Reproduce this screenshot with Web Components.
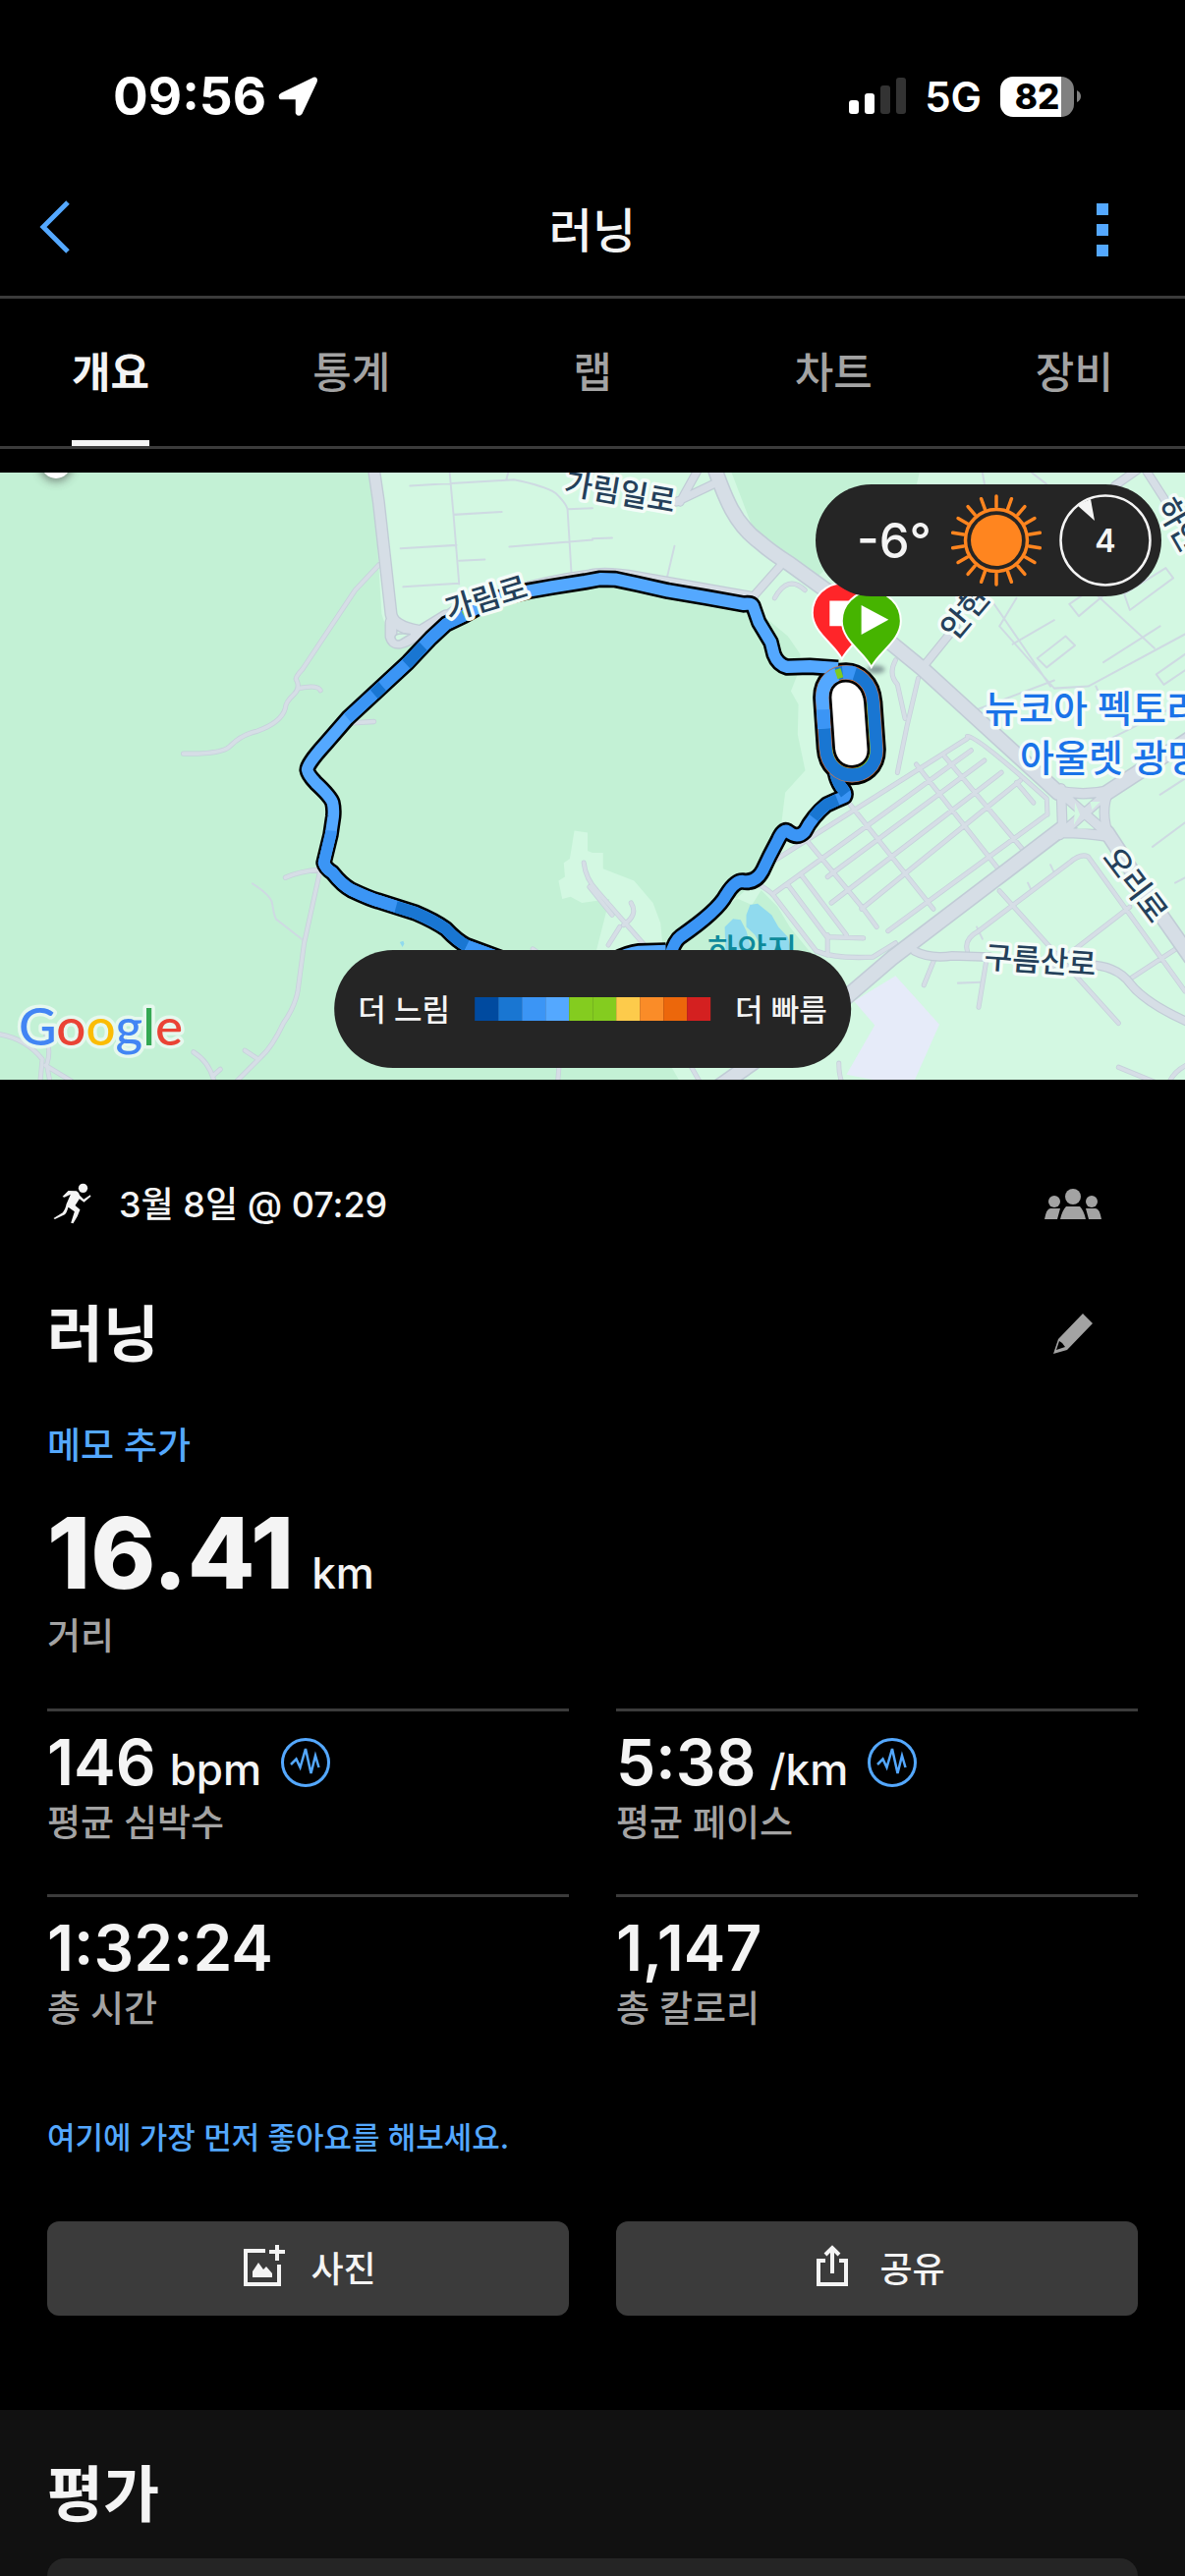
<!DOCTYPE html>
<html lang="ko">
<head>
<meta charset="utf-8">
<meta name="viewport" content="width=device-width, initial-scale=1">
<title>러닝</title>
<style>
  :root {
    --bg: #000;
    --surface: #111;
    --card: #252525;
    --line: #3b3b3b;
    --text: #f4f4f4;
    --muted: #a3a3a3;
    --accent: #54a8ff;
    --gutter: 48px;
  }
  body {
    margin: 0;
    background: var(--bg);
    color: var(--text);
    font-family: Inter, "Noto Sans CJK KR", sans-serif;
    font-weight: 500;
  }
</style>
</head>
<body>
<activity-page>
  <status-bar slot="top" time="09:56" network="5G" battery="82"></status-bar>
  <nav-header slot="top">러닝</nav-header>
  <tab-bar slot="top">
    <tab-item selected>개요</tab-item>
    <tab-item>통계</tab-item>
    <tab-item>랩</tab-item>
    <tab-item>차트</tab-item>
    <tab-item>장비</tab-item>
  </tab-bar>

  <route-map>
    <weather-chip slot="weather" temp="-6°" wind="4"></weather-chip>
    <pace-legend slot="legend">
      <span slot="slow">더 느림</span>
      <span slot="fast">더 빠름</span>
    </pace-legend>
  </route-map>

  <activity-summary>
    <span slot="date">3월 8일 @ 07:29</span>
    <span slot="name">러닝</span>
    <span slot="memo">메모 추가</span>
    <stat-tile slot="hero" size="large" value="16.41" unit="km">거리</stat-tile>
    <stat-tile value="146" unit="bpm" chart>평균 심박수</stat-tile>
    <stat-tile value="5:38" unit="/km" chart>평균 페이스</stat-tile>
    <stat-tile value="1:32:24">총 시간</stat-tile>
    <stat-tile value="1,147">총 칼로리</stat-tile>
    <span slot="like">여기에 가장 먼저 좋아요를 해보세요.</span>
    <action-button slot="actions" icon="photo">사진</action-button>
    <action-button slot="actions" icon="share">공유</action-button>
  </activity-summary>

  <rating-section>평가</rating-section>
</activity-page>

<script>
class BaseElement extends HTMLElement {
    constructor () {
        super();
        this.attachShadow({mode: 'open'});
    }

    connectedCallback () {
        this.shadowRoot.innerHTML = this.render();
    }

    attr (name) {
        return this.getAttribute(name) || '';
    }
}

class ActivityPage extends BaseElement {
    render () {
        return `
    <style>
      :host {
        display: flex;
        flex-direction: column;
        height: 100vh;
        overflow: hidden;
      }
      header {
        margin-bottom: 24px;
      }
      main {
        display: flex;
        flex-direction: column;
        flex: 1;
      }
    </style>
    <header><slot name="top"></slot></header>
    <main><slot></slot></main>`;
    }
}

class StatusBar extends BaseElement {
    render () {
        return `
    <style>
      :host {
        display: flex;
        align-items: center;
        justify-content: space-between;
        box-sizing: border-box;
        height: 167px;
        padding: 29px 106px 0 115px;
        color: #fff;
      }
      div {
        display: flex;
        align-items: center;
      }
      .left { gap: 12px; }
      .right { gap: 19px; }
      .time { font-size: 53px; font-weight: 700; }
      .network { font-size: 42px; font-weight: 600; }
      .battery {
        width: 75px;
        height: 41px;
        border-radius: 13px;
        justify-content: center;
        background: linear-gradient(to right, #fff 62px, #808080 62px);
        color: #000;
        font-size: 35px;
        font-weight: 800;
      }
      .cell { gap: 3px; }
      svg { display: block; }
    </style>
    <div class="left">
      <span class="time">${this.attr('time')}</span>
      <svg width="42" height="42" viewBox="0 0 42 42"><path d="M36 3 4 18.500q-3 1.500-1.500 4.500h15.500q1 0 1 1v14q1.500 3 4.500 0L38.500 6q1-4-2.500-3Z" fill="#fff" stroke="#fff" stroke-width="2.500" stroke-linejoin="round"/></svg>
    </div>
    <div class="right">
      <svg width="58" height="38" viewBox="0 0 58 38">
        <rect y="23" width="10" height="14" rx="3" fill="#fff"/>
        <rect x="16" y="16" width="10" height="21" rx="3" fill="#fff"/>
        <rect x="32" y="8" width="10" height="29" rx="3" fill="#333"/>
        <rect x="48" width="10" height="37" rx="3" fill="#333"/>
      </svg>
      <span class="network">${this.attr('network')}</span>
      <div class="cell">
        <div class="battery">${this.attr('battery')}</div>
        <svg width="4" height="12" viewBox="0 0 4 12"><path d="M0 0q4 2 4 6t-4 6Z" fill="#808080"/></svg>
      </div>
    </div>`;
    }
}

class NavHeader extends BaseElement {
    render () {
        return `
    <style>
      :host {
        display: grid;
        grid-template-columns: 1fr auto 1fr;
        align-items: center;
        height: 134px;
        padding: 0 40px;
        border-bottom: 3px solid var(--line);
      }
      h1 {
        margin: 0;
        padding-bottom: 6px;
        font-size: 48px;
        font-weight: 500;
      }
      button {
        display: block;
        padding: 0 0 6px;
        border: 0;
        background: none;
        color: var(--accent);
      }
      .menu {
        justify-self: end;
        margin-right: 38px;
        padding: 0;
      }
      svg { display: block; }
    </style>
    <button aria-label="뒤로"><svg width="32" height="54" viewBox="0 0 32 54"><path d="M29 2 4 27l25 25" fill="none" stroke="currentColor" stroke-width="5"/></svg></button>
    <h1><slot></slot></h1>
    <button class="menu" aria-label="메뉴"><svg width="12" height="54" viewBox="0 0 12 54"><path d="M0 0h12v12H0ZM0 21h12v12H0ZM0 42h12v12H0Z" fill="currentColor"/></svg></button>`;
    }
}

class TabBar extends BaseElement {
    render () {
        return `
    <style>
      :host {
        display: block;
        overflow: hidden;
        border-bottom: 3px solid var(--line);
      }
      nav {
        display: grid;
        grid-template-columns: repeat(5, 1fr);
        margin: 0 -10px;
      }
    </style>
    <nav><slot></slot></nav>`;
    }
}

class TabItem extends BaseElement {
    render () {
        return `
    <style>
      :host {
        display: flex;
        justify-content: center;
      }
      button {
        height: 150px;
        padding: 0;
        border: 0;
        border-bottom: 6px solid transparent;
        background: none;
        color: var(--muted);
        font: inherit;
        font-size: 43px;
      }
      :host([selected]) button {
        border-color: var(--text);
        color: var(--text);
        font-weight: 600;
      }
    </style>
    <button><slot></slot></button>`;
    }
}

class RouteMap extends BaseElement {
    render () {
        return `
    <style>
      :host {
        display: block;
        position: relative;
      }
      .map {
        display: block;
        width: 100%;
        background: #d3f8e2;
      }
      text {
        font-size: 31px;
        fill: #24405a;
        stroke: #f4fcf8;
        stroke-width: 7px;
        stroke-linejoin: round;
        paint-order: stroke;
      }
      .place { font-size: 38px; fill: #1a73e8; }
      .water { fill: #0e8a9b; stroke: none; font-size: 33px; }
      .brand { font-family: Lato, sans-serif; font-size: 53px; stroke: #e6f8ee; }
      .line { fill: none; stroke-linecap: round; stroke-linejoin: round; }
      ::slotted([slot=weather]) {
        position: absolute;
        top: 12px;
        right: 24px;
      }
      ::slotted([slot=legend]) {
        position: absolute;
        bottom: 12px;
        left: 50%;
        transform: translateX(-50%);
      }
    </style>
    <svg class="map" viewBox="0 0 1206 618">
      <defs>
        <path id="main" d="M1885 0C1920 95 1945 155 2010 200 2040 225 2065 240 2090 255L2200 330 2440 515 2800 825M2930 925Q2990 1010 3020 1060L3150 1235M2930 825 3150 690M2810 915 2650 1030 2360 1238 2240 1335 1900 1560"/>
        <path id="cross" d="M2795 815 2940 935M2805 930 2945 815M2808 815 2812 925M2800 820Q2865 835 2935 820 2910 870 2935 935M2810 925Q2870 925 2935 935"/>
        <path id="west" d="M988 10 1002 100 1035 380Q1040 410 1105 422M1035 400V435Q1045 470 1110 425L1180 385"/>
        <path id="feeders" d="M2065 260 1990 340M2440 515 2530 410M1800 100 1850 15M1790 100 1890 55M2420 1220Q2460 1240 2520 1232L2620 1235M2860 1255Q2950 1250 2990 1300T3150 1400M3025 10 3100 120M3010 20 2950 60M1105 422Q1160 400 1215 360 1400 300 1560 280 1600 270 1690 285L1990 335"/>
        <path id="streets" d="M1003 257 940 320 800 518Q778 540 785 545 795 565 778 580 755 600 755 615 745 650 680 672 640 680 610 708 590 730 485 728M790 565Q840 555 848 570M847 1020 805 1200 788 1320Q780 1360 750 1400 720 1460 690 1485L610 1560M755 1037Q790 1022 845 1017M920 652 990 648M0 1428Q70 1440 112 1490L105 1560M125 1500Q135 1470 122 1430M125 1510 135 1560M120 1505 190 1545M512 1472Q560 1500 570 1560M565 1530 583 1515M648 1468 680 1488M1545 1000Q1550 1040 1580 1070L1710 1210M1640 1160 1610 1205M1670 1100Q1690 1130 1650 1155M1560 1060 1620 1130M2000 1050Q2040 1070 2050 1085L2160 1220Q2210 1240 2310 1235L2370 1200M2085 1055 2188 1185 2285 1188M2120 1030 2240 1180M2140 950 2285 1115 2320 1160M2250 855 2470 1115M2425 755 2650 1025M2500 735 2705 965M2560 685Q2580 680 2770 840L2772 880M2050 1075 2570 720M2040 1000 2560 690M2200 1100 2650 775M2190 1035 2605 745M2280 1115 2700 795M2350 1170 2770 880M2690 800 2735 850M2190 1180V1230M2645 1070 2960 1400M2560 1220Q2550 1190 2590 1170L2830 1000Q2860 975 2880 985L3136 1320M2990 1290 3136 1200M2990 1110 2770 1270M2610 1245 2590 1360M2475 1235 2445 1305M2430 540 2400 660 2375 775M2370 495Q2350 530 2375 555L2395 640M2050 340Q2085 280 2130 320M1480 1500 1475 1560M1410 1215 1440 1235M2220 1500Q2220 1540 2235 1560M1830 1510 1860 1560M2960 1510 3090 1560Q3100 1520 3150 1500"/>
        <path id="lanes" d="M1085 60 1360 45Q1440 60 1470 78 1500 105 1502 120L1512 275M1190 27 1200 130 1215 305M1200 132 1328 125M1060 216 1208 208M1215 247 1283 244M1067 312 1215 303M1348 212 1568 195M1502 118 1568 116M1340 45 1345 27M668 1052Q715 1080 720 1100 725 1130 730 1140L805 1195M1785 210 1765 290M1568 192 1620 190M2645 410 2790 565 2880 560 3136 430M2645 410 2690 340M2680 455 2790 395M2745 490 2820 435 2845 458 2770 513ZM2830 355 2930 290 2950 310 2855 385ZM2975 330 3085 265 3105 290 2990 370ZM3060 530 3136 480M3060 530 3080 556 3136 520M2900 330 3055 465M2920 500 3070 410M2620 340 2780 560M2900 560 2920 600M2930 695 3130 600M2580 620 2790 545M3050 960 3136 900M3110 1050 3150 1030M3070 830 3136 790M2600 27 2610 80M2730 27 2770 56M2535 1300 2595 1298M2585 1160 2600 1190M2780 1005 2790 1025M2720 1050 2730 1070"/>
        <path id="route" d="M2218 515 2143 510 2083 512Q2058 505 2048 480L2040 450 2008 400 1993 360Q1988 352 1968 355L1868 338 1768 322 1688 305 1628 293 1588 292 1548 299 1460 312 1400 322 1300 345 1230 382 1180 405 1140 440 1080 500 1000 570 920 640 860 705Q812 755 813 768 815 780 835 800 875 835 880 850 884 865 882 885L875 930 857 1000Q860 1012 880 1025 905 1055 930 1068 980 1090 1000 1095L1100 1125Q1150 1145 1180 1165 1210 1195 1235 1207L1330 1240M1620 1245Q1660 1225 1690 1222L1762 1220"/>
        <path id="climb" d="M1772 1235Q1785 1195 1800 1185 1900 1120 1922 1080 1945 1045 1965 1046 2000 1052 2018 1020 2035 985 2058 945 2072 915 2085 922 2110 942 2130 922 2150 885 2188 855 2210 845 2236 835 2242 825 2225 810 2214 795 2210 775"/>
        <path id="track" d="M2176 590C2173 504 2303 500 2311 600L2320 718C2320 802 2190 806 2185 712Z"/>
        <path id="pin" d="M0 0C-20-38-78-66-78-115-78-157-41-189 0-189S78-157 78-115C78-66 20-38 0 0Z"/>
        <filter id="soft" x="-50%" y="-50%" width="200%" height="200%"><feGaussianBlur stdDeviation="5"/></filter>
      </defs>
      <svg width="1206" height="618" viewBox="0 27 3136 1514" preserveAspectRatio="none">
        <g fill="#c3f1d5">
          <path d="M0 0H985L1010 380 1035 450 1110 430 1260 370 1588 290 1980 360 2040 400 2085 435 2118 480 2115 520 2093 572 2113 605 2111 680 2131 770 2078 825 2063 940 2000 1055 2058 1110 2090 1160 2150 1230 1900 1400 1778 1511 1808 1560H0Z"/>
          <path d="M1925 0H2440L2425 60 2160 290 2090 240 1990 160Z"/>
        </g>
        <path d="M1520 920 1555 925V970L1568 975H1596V1015L1678 1045 1728 1100 1748 1150 1755 1220H1578L1613 1090 1540 1100 1510 1085 1488 1090 1478 1045 1495 1035 1492 1000 1508 990ZM1940 1085 1990 1105 2020 1060 1995 1050 1900 1130Z" fill="#d3f8e2"/>
        <path d="M2370 1282 2486 1403 2412 1560 2240 1528 2315 1405 2260 1345Z" fill="#e6ebf9"/>
        <path d="M1975 1130 1985 1105 2005 1102 2042 1130 2060 1160 2085 1185 2095 1220H2020L1998 1180 1975 1160ZM1918 1160 1940 1140 1960 1142 1975 1170 1990 1220H1920ZM1058 1198 1067 1195 1070 1202 1065 1210Z" fill="#90daee"/>
        <g class="line">
          <use href="#lanes" stroke="#cedae2" stroke-width="5"/>
          <use href="#streets" stroke="#c6d1db" stroke-width="13"/>
          <use href="#streets" stroke="#d6dee6" stroke-width="9"/>
          <use href="#feeders" stroke="#c1ccd6" stroke-width="24"/>
          <use href="#west" stroke="#c1ccd6" stroke-width="34"/>
          <use href="#main" stroke="#c1ccd6" stroke-width="42"/>
          <use href="#cross" stroke="#c1ccd6" stroke-width="28"/>
          <use href="#feeders" stroke="#d6dee6" stroke-width="18"/>
          <use href="#west" stroke="#d6dee6" stroke-width="27"/>
          <use href="#main" stroke="#d6dee6" stroke-width="34"/>
          <use href="#cross" stroke="#d6dee6" stroke-width="22"/>
          <path d="M2845 850 2858 880 2842 905ZM2885 848 2912 848 2890 868ZM2870 895 2895 915 2850 915Z" fill="#d3f8e2"/>
          <path d="M1045 438Q1045 425 1085 430L1060 444Q1048 450 1045 438Z" fill="#d3f8e2" stroke="#c1ccd6" stroke-width="4"/>
        </g>
        <g class="line" style="stroke-linecap: butt">
          <use href="#route" stroke="#000" stroke-width="43"/>
          <use href="#climb" stroke="#000" stroke-width="43"/>
          <use href="#track" fill="#fff" stroke="#000" stroke-width="50"/>
          <use href="#route" stroke="#54a8ff" stroke-width="30"/>
          <use href="#climb" stroke="#3b95f5" stroke-width="30"/>
          <path d="M1235 380 1180 405 1140 440 1080 500 1000 570 920 640M876 920 875 930 857 1000Q860 1012 880 1025 905 1055 930 1068 980 1090 1000 1095L1050 1110M1235 1207 1330 1240" stroke="#3b95f5" stroke-width="30"/>
          <path d="M1120 460 1075 505M1012 560 990 580M1048 1110 1100 1125Q1150 1145 1180 1165 1210 1195 1235 1207M2153 888Q2170 865 2188 855L2216 843M2238 828Q2214 795 2210 775" stroke="#1976d2" stroke-width="30"/>
          <path d="M1238 378 1228 384" stroke="#7fcb1d" stroke-width="24"/>
          <use href="#track" stroke="#df7740" stroke-width="36"/>
          <path d="M2303 600 2312 718C2310 792 2196 796 2193 712" stroke="#7fcb1d" stroke-width="19"/>
          <use href="#track" stroke="#1976d2" stroke-width="33"/>
          <path d="M2181 665 2176 590C2176 560 2190 540 2215 530" stroke="#54a8ff" stroke-width="34"/>
          <path d="M2179 618 2181 665M2230 526Q2250 524 2262 528" stroke="#3b95f5" stroke-width="34"/>
          <path d="M2213 531 2228 526" stroke="#7fcb1d" stroke-width="24"/>
        </g>
        <ellipse cx="2318" cy="518" rx="24" ry="10" fill="#53606a" opacity=".6" filter="url(#soft)"/>
        <g stroke="#fff" stroke-width="5">
          <use href="#pin" x="2228" y="492" fill="#ff2529"/>
          <path d="M2198 349h60v58h-60Z" fill="#fff"/>
          <use href="#pin" x="2306" y="512" fill="#46b400"/>
          <path d="M2282 362 2346 394 2282 427Z" fill="#fff"/>
        </g>
      </svg>
      <circle cx="57" cy="-8" r="17" fill="#444" opacity=".6" filter="url(#soft)"/>
      <circle cx="57" cy="-9" r="15" fill="#fff"/>
      <text transform="translate(573 21) rotate(10)">가림일로</text>
      <text transform="translate(457 151) rotate(-17)">가림로</text>
      <text transform="translate(972 172) rotate(-50)">안현</text>
      <text transform="translate(1176 34) rotate(60)">하안</text>
      <text transform="translate(1121 392) rotate(53)">오리로</text>
      <text transform="translate(1001 504) rotate(4)">구름산로</text>
      <text class="place" x="1002" y="254">뉴코아 펙토리</text>
      <text class="place" x="1038" y="304">아울렛 광명점</text>
      <text class="water" x="720" y="498">하안지</text>
      <text class="brand" x="19" y="583"><tspan fill="#4285f4">G</tspan><tspan fill="#ea4335">o</tspan><tspan fill="#fbbc05">o</tspan><tspan fill="#4285f4">g</tspan><tspan fill="#34a853">l</tspan><tspan fill="#ea4335">e</tspan></text>
    </svg>
    <slot name="weather"></slot>
    <slot name="legend"></slot>`;
    }
}

class WeatherChip extends BaseElement {
    render () {
        let rays = '';
        for (let a = 0; a < 360; a += 20) {
            rays += `<path d="M0-34V-45" transform="rotate(${a})"/>`;
        }
        return `
    <style>
      :host {
        display: flex;
        align-items: center;
        box-sizing: border-box;
        height: 114px;
        padding: 0 10px 0 42px;
        border-radius: 57px;
        background: var(--card);
      }
      .temp {
        margin-right: 20px;
        font-size: 49px;
      }
      .sun {
        width: 92px;
        height: 94px;
        margin-right: 18px;
      }
      .wind {
        display: grid;
        place-items: center;
        font-size: 32px;
        font-weight: 600;
      }
      .wind > * { grid-area: 1 / 1; }
    </style>
    <span class="temp">${this.attr('temp')}</span>
    <svg class="sun" viewBox="-46 -47 92 94">
      <g fill="none" stroke="#ff851f" stroke-width="3.500" stroke-linecap="round">${rays}<circle r="31.500"/></g>
      <circle r="26" fill="#ff851f"/>
    </svg>
    <div class="wind">
      <svg width="94" height="94" viewBox="-47 -47 94 94"><circle r="45.500" fill="none" stroke="#f4f4f4" stroke-width="2.500"/><path d="M-29-36-15-42-11-20Z" fill="#f4f4f4"/></svg>
      <span>${this.attr('wind')}</span>
    </div>`;
    }
}

class PaceLegend extends BaseElement {
    render () {
        const colors = ['#004a9f', '#1976d2', '#3b95f5', '#54a8ff', '#84cc1f', '#84cc1f', '#fdcb4b', '#fa8c28', '#ec670b', '#d42020'];
        return `
    <style>
      :host {
        display: flex;
        align-items: center;
        gap: 25px;
        box-sizing: border-box;
        height: 120px;
        padding: 0 24px;
        border-radius: 60px;
        background: var(--card);
        font-size: 31px;
        white-space: nowrap;
      }
      ::slotted(*) { padding-bottom: 4px; }
      .scale { display: flex; }
      i {
        width: 24px;
        height: 24px;
      }
    </style>
    <slot name="slow"></slot>
    <div class="scale">${colors.map(c => `<i style="background: ${c}"></i>`).join('')}</div>
    <slot name="fast"></slot>`;
    }
}

class ActivitySummary extends BaseElement {
    render () {
        return `
    <style>
      :host {
        display: block;
        padding: 96px var(--gutter);
      }
      .row {
        display: flex;
        align-items: center;
        justify-content: space-between;
      }
      .date {
        height: 60px;
        font-size: 36px;
      }
      .date p {
        display: flex;
        align-items: center;
        gap: 28px;
        margin: 0 0 0 6px;
      }
      .date ::slotted(span) { padding-bottom: 4px; }
      .title {
        height: 92px;
        margin-top: 57px;
      }
      h2 {
        margin: 0;
        padding-bottom: 8px;
        font-size: 62px;
        font-weight: 600;
      }
      button {
        display: flex;
        justify-content: center;
        width: 60px;
        margin-right: 36px;
        padding: 0;
        border: 0;
        background: none;
        color: var(--muted);
      }
      a {
        display: block;
        color: var(--accent);
        text-decoration: none;
      }
      .memo {
        margin: 41px 0 32px;
        font-size: 37px;
        line-height: 54px;
      }
      .grid {
        display: grid;
        grid-template-columns: 1fr 1fr;
        column-gap: 48px;
      }
      .like {
        margin: 34px 0 60px;
        font-size: 31px;
        line-height: 50px;
      }
      svg { display: block; }
    </style>
    <div class="row date">
      <p>
        <svg width="39" height="42" viewBox="71 43 116 126" fill="#f4f4f4"><circle cx="162" cy="59" r="14"/><path d="M99 85 117 67 142 68Q152 74 152 81L164 93 184 80 186 84 165 102 151 92 138 112 153 125Q147 145 132 167L125 165 136 131 117 117Q112 135 106 140L76 154 72 151 100 134Q110 118 111 108L124 78 105 87Z"/></svg>
        <slot name="date"></slot>
      </p>
      <button aria-label="그룹"><svg width="58" height="31" viewBox="0 0 58 31" fill="currentColor"><circle cx="29" cy="8" r="8"/><circle cx="10" cy="13" r="6"/><circle cx="48" cy="13" r="6"/><path d="M16 31Q18 22 22 18H36Q40 22 42 31ZM0 31Q2 20 6 20H16L13 31ZM58 31Q56 20 52 20H42L45 31Z"/></svg></button>
    </div>
    <div class="row title">
      <h2><slot name="name"></slot></h2>
      <button aria-label="편집"><svg width="40" height="42" viewBox="0 0 40 42" fill="currentColor"><path fill-rule="evenodd" d="M30 0 40 10 14 37 0 41 5 26ZM6 28 3 37 12 34 9 30Z"/></svg></button>
    </div>
    <a class="memo" href="#memo"><slot name="memo"></slot></a>
    <slot name="hero"></slot>
    <div class="grid"><slot></slot></div>
    <a class="like" href="#like"><slot name="like"></slot></a>
    <div class="grid"><slot name="actions"></slot></div>`;
    }
}

class StatTile extends BaseElement {
    render () {
        const chart = `<svg width="50" height="50" viewBox="0 0 50 50" fill="none" stroke="currentColor"><circle cx="25" cy="25" r="23.500" stroke-width="3"/><path d="M10 27 15.500 21.500 19.500 30 25 11 30.500 36 35 18 38.500 30" stroke-width="2.500"/></svg>`;
        return `
    <style>
      :host {
        display: block;
        height: 186px;
        border-top: 3px solid var(--line);
      }
      .value {
        display: flex;
        align-items: baseline;
        gap: 14px;
        margin-top: 16px;
      }
      b {
        font-size: 64px;
        font-weight: 600;
        line-height: 72px;
      }
      .unit { font-size: 44px; }
      svg {
        display: block;
        align-self: center;
        margin-left: 6px;
        color: var(--accent);
      }
      .label {
        color: var(--muted);
        font-size: 37px;
        line-height: 54px;
        margin-top: -1px;
      }
      :host([size=large]) {
        height: 208px;
        border: 0;
      }
      :host([size=large]) .value {
        gap: 18px;
        margin: 0;
      }
      :host([size=large]) b {
        font-size: 100px;
        font-weight: 800;
        line-height: 100px;
      }
      :host([size=large]) .label { margin-top: 8px; }
    </style>
    <div class="value">
      <b>${this.attr('value')}</b>
      ${this.attr('unit') && `<span class="unit">${this.attr('unit')}</span>`}
      ${this.hasAttribute('chart') ? chart : ''}
    </div>
    <div class="label"><slot></slot></div>`;
    }
}

const icons = {
    photo: '<path d="M26 8H6v34h34V22" fill="none" stroke="currentColor" stroke-width="4"/><path d="M38 2v16M30 9h16" stroke="currentColor" stroke-width="4"/><path d="M13 35V29l6-9 5 7 3-3 6 7v4Z" fill="currentColor"/>',
    share: '<path d="M17 18H10v24h28V18h-7" fill="none" stroke="currentColor" stroke-width="4"/><path d="M24 31V6M17 12l7-7 7 7" fill="none" stroke="currentColor" stroke-width="4"/>'
};

class ActionButton extends BaseElement {
    render () {
        return `
    <style>
      :host { display: block; }
      button {
        display: flex;
        align-items: center;
        justify-content: center;
        gap: 24px;
        width: 100%;
        height: 96px;
        padding: 0 0 4px;
        border: 0;
        border-radius: 12px;
        background: var(--line);
        color: var(--text);
        font: inherit;
        font-size: 36px;
      }
    </style>
    <button><svg width="48" height="48" viewBox="0 0 48 48">${icons[this.attr('icon')]}</svg><slot></slot></button>`;
    }
}

class RatingSection extends BaseElement {
    render () {
        return `
    <style>
      :host {
        display: flex;
        flex-direction: column;
        flex: 1;
        padding: 0 var(--gutter);
        background: var(--surface);
      }
      h2 {
        margin: 42px 0 19px;
        font-size: 62px;
        font-weight: 600;
        line-height: 90px;
      }
      .card {
        flex: 1;
        border-radius: 24px 24px 0 0;
        background: var(--card);
      }
    </style>
    <h2><slot></slot></h2>
    <div class="card"></div>`;
    }
}

customElements.define('activity-page', ActivityPage);
customElements.define('status-bar', StatusBar);
customElements.define('nav-header', NavHeader);
customElements.define('tab-bar', TabBar);
customElements.define('tab-item', TabItem);
customElements.define('route-map', RouteMap);
customElements.define('weather-chip', WeatherChip);
customElements.define('pace-legend', PaceLegend);
customElements.define('activity-summary', ActivitySummary);
customElements.define('stat-tile', StatTile);
customElements.define('action-button', ActionButton);
customElements.define('rating-section', RatingSection);
</script>
</body>
</html>
